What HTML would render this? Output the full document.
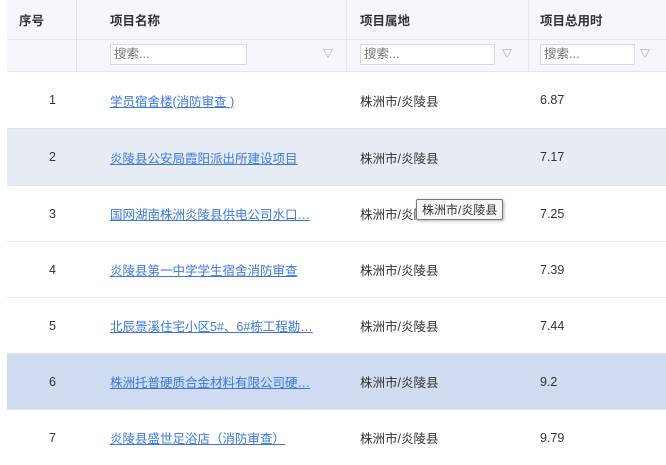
<!DOCTYPE html><html><head><meta charset="utf-8"><style>
body{margin:0;width:666px;height:462px;overflow:hidden;background:#fff;font-family:"Liberation Sans","Noto Sans CJK SC",sans-serif;font-size:12.5px;color:#333;position:relative}
.t{position:absolute;left:7px;top:0;width:659px}
.r{position:absolute;left:0;width:659px;border-bottom:1px solid #e3e6eb}
.c{position:absolute;top:0;height:100%;display:flex;align-items:center}
.h{background:#f5f7fa}
.h .c{border-right:1px solid #e3e6eb;box-sizing:border-box;font-weight:bold;font-size:12.5px}
.in{position:absolute;height:21px;border:1px solid #d6d9de;background:#fff;box-sizing:border-box;color:#777;font-size:12.5px;line-height:19px;padding-left:3px}
.f{position:absolute;top:5px;font-size:10px;color:#888}
a{color:#3a78e0;text-decoration:underline}
.tip{position:absolute;left:416px;top:199px;border:1px solid #777;border-radius:2px;background:#f8f8fa;padding:1px 5px;font-size:12px;box-shadow:1px 1px 3px rgba(0,0,0,.3)}
</style></head><body>
<div class="t">
<div class="r h" style="top:0;height:39px">
<div class="c" style="left:0;width:70px;padding-left:12px;box-sizing:border-box">序号</div>
<div class="c" style="left:70px;width:270px;padding-left:33px">项目名称</div>
<div class="c" style="left:340px;width:182px;padding-left:13px">项目属地</div>
<div class="c" style="left:522px;width:137px;padding-left:11px;border-right:none">项目总用时</div>
</div>
<div class="r h" style="top:40px;height:31px">
<div class="c" style="left:0;width:70px"></div>
<div class="c" style="left:70px;width:270px"></div>
<div class="c" style="left:340px;width:182px"></div>
<div class="c" style="left:522px;width:137px;border-right:none"></div>
<div class="in" style="left:103px;top:4px;width:137px">搜索...</div><div class="f" style="left:316px">▽</div>
<div class="in" style="left:353px;top:4px;width:135px">搜索...</div><div class="f" style="left:495px">▽</div>
<div class="in" style="left:533px;top:4px;width:95px">搜索...</div><div class="f" style="left:633px">▽</div>
</div>
</div>
<div class="t" style="top:72px">
<div class="r" style="top:0;height:56px"><div class="c" style="left:42px">1</div><div class="c" style="left:103px"><a>学员宿舍楼(消防审查 )</a></div><div class="c" style="left:353px">株洲市/炎陵县</div><div class="c" style="left:533px">6.87</div></div>
<div class="r" style="top:57px;height:56px;background:#e8edf5"><div class="c" style="left:42px">2</div><div class="c" style="left:103px"><a>炎陵县公安局霞阳派出所建设项目</a></div><div class="c" style="left:353px">株洲市/炎陵县</div><div class="c" style="left:533px">7.17</div></div>
<div class="r" style="top:114px;height:55px"><div class="c" style="left:42px">3</div><div class="c" style="left:103px"><a>国网湖南株洲炎陵县供电公司水口…</a></div><div class="c" style="left:353px">株洲市/炎陵县</div><div class="c" style="left:533px">7.25</div></div>
<div class="r" style="top:170px;height:55px"><div class="c" style="left:42px">4</div><div class="c" style="left:103px"><a>炎陵县第一中学学生宿舍消防审查</a></div><div class="c" style="left:353px">株洲市/炎陵县</div><div class="c" style="left:533px">7.39</div></div>
<div class="r" style="top:226px;height:55px"><div class="c" style="left:42px">5</div><div class="c" style="left:103px"><a>北辰景溪住宅小区5#、6#栋工程勘…</a></div><div class="c" style="left:353px">株洲市/炎陵县</div><div class="c" style="left:533px">7.44</div></div>
<div class="r" style="top:282px;height:55px;background:#cfdcf2"><div class="c" style="left:42px">6</div><div class="c" style="left:103px"><a>株洲托普硬质合金材料有限公司硬…</a></div><div class="c" style="left:353px">株洲市/炎陵县</div><div class="c" style="left:533px">9.2</div></div>
<div class="r" style="top:338px;height:55px;border:none"><div class="c" style="left:42px">7</div><div class="c" style="left:103px"><a>炎陵县盛世足浴店（消防审查）</a></div><div class="c" style="left:353px">株洲市/炎陵县</div><div class="c" style="left:533px">9.79</div></div>
</div>
<div class="tip">株洲市/炎陵县</div>
</body></html>
